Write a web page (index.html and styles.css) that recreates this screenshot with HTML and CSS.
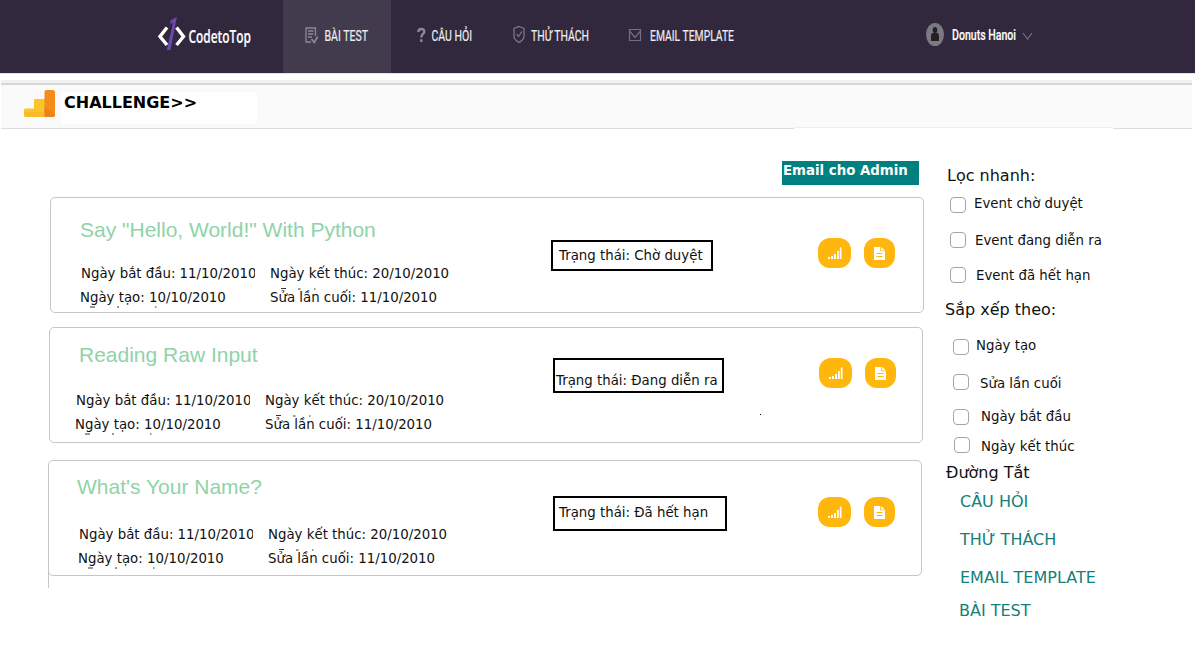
FILE: index.html
```html
<!DOCTYPE html>
<html lang="vi">
<head>
<meta charset="utf-8">
<title>CodetoTop</title>
<link rel="stylesheet" href="styles.css">
</head>
<body>
<svg class="defs" width="0" height="0">
  <symbol id="bars" viewBox="0 0 14 12"><path d="M0 10h2v2H0zM3 9h2v3H3zM6 7h2v5H6zM9 4h1.800v8H9zM11.800 .5h1.700V12h-1.700z" fill="#fff"/></symbol>
  <symbol id="doc" viewBox="0 0 11 13"><path d="M0 0h6.200v4.300H11V13H0z" fill="#fff"/><path d="M7.200 0L11 3.400H7.200z" fill="#fff"/><path d="M2.500 6.500h6M2.500 9.500h6" stroke="#ffb60d" stroke-width="1"/></symbol>
  <symbol id="marks-top" viewBox="0 0 44 2"><path d="M0 .5h5M17 1h2.500M33 1h1.500" stroke="#333" stroke-width="1"/></symbol>
  <symbol id="marks-bottom" viewBox="0 0 74 2"><path d="M0 1h5M27 1h2M65 1h1.500" stroke="#333" stroke-width="1"/></symbol>
</svg>
<header class="topbar">
  <a class="brand"><svg width="115" height="73" viewBox="150 0 115 73">
    <path d="M167 27.500L160 36.500L167 45M176.500 27.500L183.500 36.500L176.500 45" fill="none" stroke="#fff" stroke-width="3.400"/>
    <path d="M176.800 17L170.300 20.500V24L173 23L166.800 50H170.500z" fill="#6b48ae"/>
    <text class="brand-text" x="188.500" y="42.500" textLength="62.500" lengthAdjust="spacingAndGlyphs">CodetoTop</text>
  </svg></a>
  <nav class="nav">
    <a class="nav-item active"><svg width="108" height="73" viewBox="283 0 108 73">
      <g fill="none" stroke="#8d8797" stroke-width="1.300"><path d="M311 42h-5V28h9.500v8"/><path d="M308 31h5.500M308 34h5.500M308 37h4"/><path d="M311.500 39l2.700 3.500 3.500-6" stroke-width="1.700"/></g>
      <text x="324.500" y="40.500" textLength="43.500" lengthAdjust="spacingAndGlyphs">BÀI TEST</text></svg></a>
    <a class="nav-item"><svg width="105" height="73" viewBox="391 0 105 73">
      <path d="M418.300 32c0-4 6-4 6-.500 0 2.500-3 2.500-3 6M421.300 39.300v2.600" fill="none" stroke="#8d8797" stroke-width="2.400"/>
      <text x="431.500" y="40.500" textLength="40.500" lengthAdjust="spacingAndGlyphs">CÂU HỎI</text></svg></a>
    <a class="nav-item"><svg width="116" height="73" viewBox="496 0 116 73">
      <g fill="none" stroke="#817a8d" stroke-width="1.200"><path d="M519 26.500l5 2v8c0 2.500-2.500 4.500-5 6-2.500-1.500-5-3.500-5-6v-8z"/><path d="M516.500 34l2 2.500 3.500-5"/></g>
      <text x="531" y="40.500" textLength="58" lengthAdjust="spacingAndGlyphs">THỬ THÁCH</text></svg></a>
    <a class="nav-item"><svg width="148" height="73" viewBox="612 0 148 73">
      <path d="M629.500 29.500h11v11h-11zM629.500 31l5.500 6.500 5.500-6.500" fill="none" stroke="#756e82" stroke-width="1.200"/>
      <text x="650" y="40.500" textLength="84" lengthAdjust="spacingAndGlyphs">EMAIL TEMPLATE</text></svg></a>
  </nav>
  <a class="user"><svg width="130" height="73" viewBox="915 0 130 73">
    <ellipse cx="935" cy="34.500" rx="9" ry="11.500" fill="#7d7983"/><ellipse cx="935" cy="30" rx="2.300" ry="3" fill="#222"/><path d="M931 41v-5.500c0-2 1.500-3 4-3s4 1 4 3V41z" fill="#222"/>
    <text class="user-text" x="952" y="39.500" textLength="64" lengthAdjust="spacingAndGlyphs">Donuts Hanoi</text>
    <path d="M1023 33l4.500 6 4.500-6" fill="none" stroke="#777081" stroke-width="1.200"/>
  </svg></a>
</header>
<section class="crumb">
  <svg class="crumb-icon" width="31" height="28" viewBox="0 0 31 28"><path d="M0 20q0-1.500 1.500-1.500H10V10.500Q10 9 11.500 9H21v18H2q-2 0-2-2z" fill="#fbc429"/><path d="M0 22h20v5H2q-2 0-2-2z" fill="#f9bb27"/><rect x="20.500" width="10.500" height="27" rx="2" fill="#f58b1b"/><path d="M20.500 17L31 24v1q0 2-2 2h-8.500z" fill="#ee821a"/></svg>
  <h1>CHALLENGE&gt;&gt;</h1>
  <i class="crumb-gap"></i>
</section>
<main class="content">
  <div class="list">
    <a class="email-btn">Email cho Admin</a>
    <article class="card one">
      <div class="info">
        <h2>Say "Hello, World!" With Python</h2>
        <div class="dates">
          <div class="left"><p class="clip">Ngày bắt đầu: 11/10/2010</p><p>Ngày tạo: 10/10/2010</p><svg class="mb" width="74" height="2"><use href="#marks-bottom"/></svg></div>
          <div class="right"><p>Ngày kết thúc: 20/10/2010</p><p>Sửa lần cuối: 11/10/2010</p><svg class="mt" width="44" height="2"><use href="#marks-top"/></svg></div>
        </div>
      </div>
      <div class="status">Trạng thái: Chờ duyệt</div>
      <div class="actions"><button class="stat"><svg width="14" height="12"><use href="#bars"/></svg></button><button class="note"><svg width="11" height="13"><use href="#doc"/></svg></button></div>
    </article>
    <article class="card two">
      <div class="info">
        <h2>Reading Raw Input</h2>
        <div class="dates">
          <div class="left"><p class="clip">Ngày bắt đầu: 11/10/2010</p><p>Ngày tạo: 10/10/2010</p><svg class="mb" width="74" height="2"><use href="#marks-bottom"/></svg></div>
          <div class="right"><p>Ngày kết thúc: 20/10/2010</p><p>Sửa lần cuối: 11/10/2010</p><svg class="mt" width="44" height="2"><use href="#marks-top"/></svg></div>
        </div>
      </div>
      <div class="status">Trạng thái: Đang diễn ra</div>
      <div class="actions"><button class="stat"><svg width="14" height="12"><use href="#bars"/></svg></button><button class="note"><svg width="11" height="13"><use href="#doc"/></svg></button></div>
      <i class="dot"></i>
    </article>
    <article class="card three">
      <div class="info">
        <h2>What's Your Name?</h2>
        <div class="dates">
          <div class="left"><p class="clip">Ngày bắt đầu: 11/10/2010</p><p>Ngày tạo: 10/10/2010</p><svg class="mb" width="74" height="2"><use href="#marks-bottom"/></svg></div>
          <div class="right"><p>Ngày kết thúc: 20/10/2010</p><p>Sửa lần cuối: 11/10/2010</p><svg class="mt" width="44" height="2"><use href="#marks-top"/></svg></div>
        </div>
      </div>
      <div class="status">Trạng thái: Đã hết hạn</div>
      <div class="actions"><button class="stat"><svg width="14" height="12"><use href="#bars"/></svg></button><button class="note"><svg width="11" height="13"><use href="#doc"/></svg></button></div>
      <i class="edge"></i>
    </article>
  </div>
  <aside class="side">
    <h3>Lọc nhanh:</h3>
    <div class="filters">
      <label><i class="box"></i><span>Event chờ duyệt</span></label>
      <label><i class="box"></i><span>Event đang diễn ra</span></label>
      <label><i class="box"></i><span>Event đã hết hạn</span></label>
    </div>
    <h3 class="sort-title">Sắp xếp theo:</h3>
    <div class="sorts">
      <label><i class="box"></i><span>Ngày tạo</span></label>
      <label><i class="box"></i><span>Sửa lần cuối</span></label>
      <label><i class="box"></i><span>Ngày bắt đầu</span></label>
      <label><i class="box"></i><span>Ngày kết thúc</span></label>
    </div>
    <h3 class="link-title">Đường Tắt</h3>
    <div class="links"><a>CÂU HỎI</a><a>THỬ THÁCH</a><a>EMAIL TEMPLATE</a><a>BÀI TEST</a></div>
  </aside>
</main>
</body>
</html>
```
FILE: styles.css
```css
* { box-sizing: border-box; margin: 0; padding: 0; }
body { width: 1196px; height: 656px; overflow: hidden; background: #fff; color: #111; font: 13.333px/16px "DejaVu Sans", sans-serif; }
.defs { position: absolute; }
svg { display: block; overflow: visible; }
.topbar { display: flex; width: 1195px; height: 73px; padding-left: 150px; background: #31283d; box-shadow: 0 1px #e4e2e8; }
.brand { width: 133px; }
.nav { display: flex; }
.active { background: #423a4d; }
.topbar text { font: 14.5px Roboto, sans-serif; fill: #eeedf0; stroke: #eeedf0; stroke-width: .2px; }
.topbar .brand-text { font: 600 18px "Open Sans", sans-serif; fill: #fff; }
.topbar .user-text { font-weight: 500; fill: #fff; }
.user { margin-left: 155px; }

.crumb { position: relative; display: flex; align-items: flex-start; width: 1191px; height: 46px; margin: 10px 0 0 1px; padding: 5px 0 0 23px; background: #fafafa; border-top: 2px solid #d6d6d6; border-bottom: 1px solid #dcdcdc; box-shadow: 0 -3px #f1f1f1; }
.crumb h1 { width: 195px; height: 32px; margin: 2px 0 0 7px; padding: 1px 0 0 2px; background: #fff; color: #000; font: bold 16px/20px "DejaVu Sans", sans-serif; }
.crumb-gap { position: absolute; left: 793px; bottom: -1px; width: 319px; height: 2px; background: #fff; border-top: 1px solid #eee; }

.content { display: flex; }
.list { display: flex; flex-direction: column; width: 944px; padding-top: 32px; }
.email-btn { width: 137px; height: 24px; margin-left: 782px; padding: 2px 0 0 1px; background: teal; color: #fff; font-weight: bold; white-space: nowrap; }
.card { position: relative; display: flex; align-items: flex-start; width: 874px; height: 116px; border: 1px solid #c6c6c6; border-radius: 5px; }
.one { margin: 12px 0 0 50px; }
.two { margin: 14px 0 0 49px; }
.three { margin: 17px 0 0 48px; }
.info { width: 500px; padding-left: 29px; }
.two .info { width: 503px; }
.three .info { width: 504px; padding-left: 28px; }
.info h2 { color: #8fd3a8; font: 21px/24px "Liberation Sans", Arial, sans-serif; white-space: nowrap; padding-top: 20px; }
.two h2 { padding-top: 15px; }
.three h2 { padding-top: 14px; }
.dates { display: flex; margin: 24px 0 0 1px; }
.two .dates { margin: 26px 0 0 -3px; }
.three .dates { margin: 28px 0 0 2px; }
.dates p { white-space: nowrap; }
.dates p + p { margin-top: 8px; }
.left { position: relative; width: 189px; }
.left .clip { width: 174px; overflow: hidden; }
.left p + p { margin-left: -1px; }
.right { position: relative; }
.mb { position: absolute; left: 9px; top: 40px; }
.mt { position: absolute; left: 11px; top: 22px; }
.status { width: 162px; height: 31px; margin-top: 42px; padding: 6px 0 0 6px; border: 2px solid #000; white-space: nowrap; }
.two .status { width: 171px; height: 35px; margin-top: 30px; padding: 13px 0 0 1px; }
.three .status { width: 174px; height: 35px; margin-top: 35px; padding: 7px 0 0 4px; }
.actions { display: flex; gap: 13px; margin: 40px 0 0 105px; }
.two .actions { margin: 30px 0 0 95px; }
.three .actions { margin: 36px 0 0 91px; }
.actions button { display: flex; align-items: center; justify-content: center; width: 33px; height: 30px; border: 0; border-radius: 12px; background: #ffb60d; }
.actions .note { width: 31px; }
.dot { position: absolute; left: 710px; top: 86px; width: 1px; height: 1px; background: #000; }
.edge { position: absolute; left: -1px; top: 16px; width: 1px; height: 111px; background: #c6c6c6; }

.side { display: flex; flex-direction: column; width: 240px; padding-top: 37px; }
.side h3 { margin-left: 3px; font: 16px/20px "DejaVu Sans", sans-serif; height: 20px; }
.side label { display: flex; align-items: flex-start; gap: 8px; height: 16px; }
.box { width: 16px; height: 16px; border: 1px solid #a5a5a5; border-radius: 4px; background: #fff; }
.side span { white-space: nowrap; margin-top: 1px; }
.filters { display: flex; flex-direction: column; gap: 19px; margin: 11px 0 0 6px; }
.filters label:nth-child(1) span { margin-top: -1px; }
.filters label:nth-child(2) { gap: 9px; }
.filters label:nth-child(3) { gap: 10px; }
.side .sort-title { margin: 17px 0 0 1px; }
.sorts { display: flex; flex-direction: column; gap: 19px; margin: 19px 0 0 9px; }
.sorts label:nth-child(1) { gap: 7px; }
.sorts label:nth-child(1) span { margin-top: -1px; }
.sorts label:nth-child(2) { gap: 11px; }
.sorts label:nth-child(2) span { margin-top: 2px; }
.sorts label:nth-child(3) { gap: 12px; }
.sorts label:nth-child(3) span { margin-top: 0; }
.sorts label:nth-child(4) { gap: 11px; margin: -7px 0 0 1px; }
.sorts label:nth-child(4) span { margin-top: 2px; }
.side .link-title { margin: 10px 0 0 2px; }
.links { display: flex; flex-direction: column; gap: 18px; margin: 9px 0 0 16px; color: #14807a; font-size: 16px; line-height: 20px; }
.links a:last-child { margin: -5px 0 0 -1px; }
```
